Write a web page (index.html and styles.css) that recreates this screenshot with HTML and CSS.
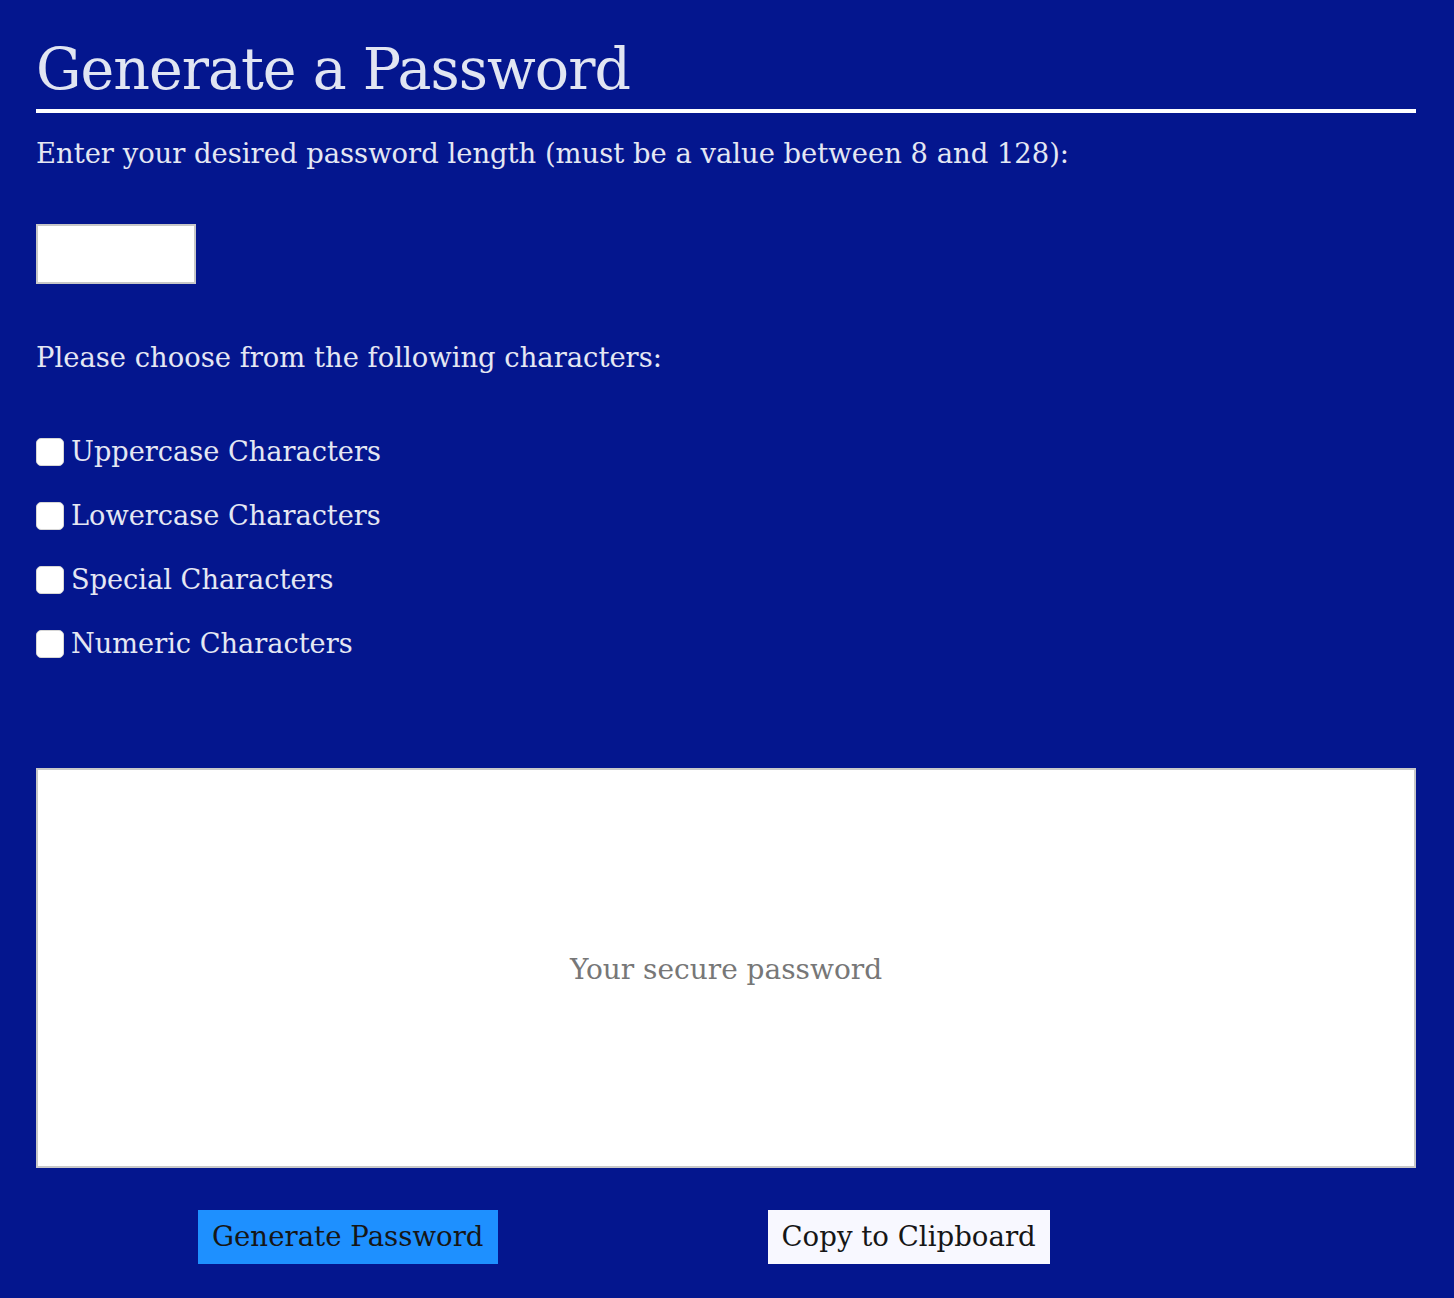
FILE: index.html
```html
<!DOCTYPE html>
<html lang="en">
<head>
<meta charset="utf-8">
<title>Password Generator</title>
<link rel="stylesheet" href="styles.css">
</head>
<body>
<main class="page">
  <h1 class="title">Generate a Password</h1>
  <p class="prompt">Enter your desired password length (must be a value between 8 and 128):</p>
  <input class="length" type="text" aria-label="Password length">
  <p class="prompt choose">Please choose from the following characters:</p>
  <div class="options">
    <label class="option"><input type="checkbox" class="check"><span>Uppercase Characters</span></label>
    <label class="option"><input type="checkbox" class="check"><span>Lowercase Characters</span></label>
    <label class="option"><input type="checkbox" class="check"><span>Special Characters</span></label>
    <label class="option"><input type="checkbox" class="check"><span>Numeric Characters</span></label>
  </div>
  <textarea class="output" readonly placeholder="Your secure password"></textarea>
  <div class="actions">
    <button class="btn btn-generate" type="button">Generate Password</button>
    <button class="btn btn-copy" type="button">Copy to Clipboard</button>
  </div>
</main>
</body>
</html>
```
FILE: styles.css
```css
html, body {
  margin: 0;
  padding: 0;
  background: #04168e;
}
body {
  font-family: "DejaVu Serif", Georgia, serif;
  color: #e4e7f3;
}
.page {
  margin: 0 38px 0 36px;
  padding-top: 31px;
  padding-bottom: 34px;
  display: flex;
  flex-direction: column;
}
.title {
  margin: 0;
  font-weight: normal;
  font-size: 57px;
  letter-spacing: -1px;
  line-height: 76px;
  color: #e1e5f2;
  border-bottom: 4px solid #ffffff;
  padding-bottom: 2px;
}
.prompt {
  margin: 0;
  font-size: 27.4px;
  line-height: 40px;
}
.prompt:first-of-type {
  margin-top: 21px;
}
.length {
  margin: 50px 0 0 0;
  width: 160px;
  height: 60px;
  box-sizing: border-box;
  border: 2px solid #c8c8c8;
  background: #fff;
  padding: 0;
}
.choose {
  margin-top: 54px;
}
.options {
  margin-top: 54px;
  display: flex;
  flex-direction: column;
  gap: 24px;
}
.option {
  display: flex;
  align-items: center;
  gap: 7px;
  font-size: 27.2px;
  line-height: 40px;
}
.check {
  appearance: none;
  -webkit-appearance: none;
  margin: 0;
  width: 28px;
  height: 28px;
  border-radius: 5px;
  background: #ffffff;
  border: 1px solid #d6d6d6;
  box-sizing: border-box;
}
.output {
  margin-top: 104px;
  width: 100%;
  height: 400px;
  box-sizing: border-box;
  border: 2px solid #c8c8c8;
  background: #fff;
  resize: none;
  padding: 180px 20px 0;
  text-align: center;
  font-family: "DejaVu Serif", Georgia, serif;
  font-size: 28px;
  line-height: 40px;
  color: #333;
  outline: none;
}
.output::placeholder {
  color: #777777;
}
.actions {
  margin-top: 42px;
  display: flex;
  gap: 270px;
  padding-left: 162px;
}
.btn {
  font-family: "DejaVu Serif", Georgia, serif;
  font-size: 27.6px;
  line-height: 34px;
  height: 54px;
  border: none;
  padding: 0 14px;
  color: #161616;
}
.btn-generate {
  background: #1e90ff;
}
.btn-copy {
  background: #f8f8ff;
}
```
